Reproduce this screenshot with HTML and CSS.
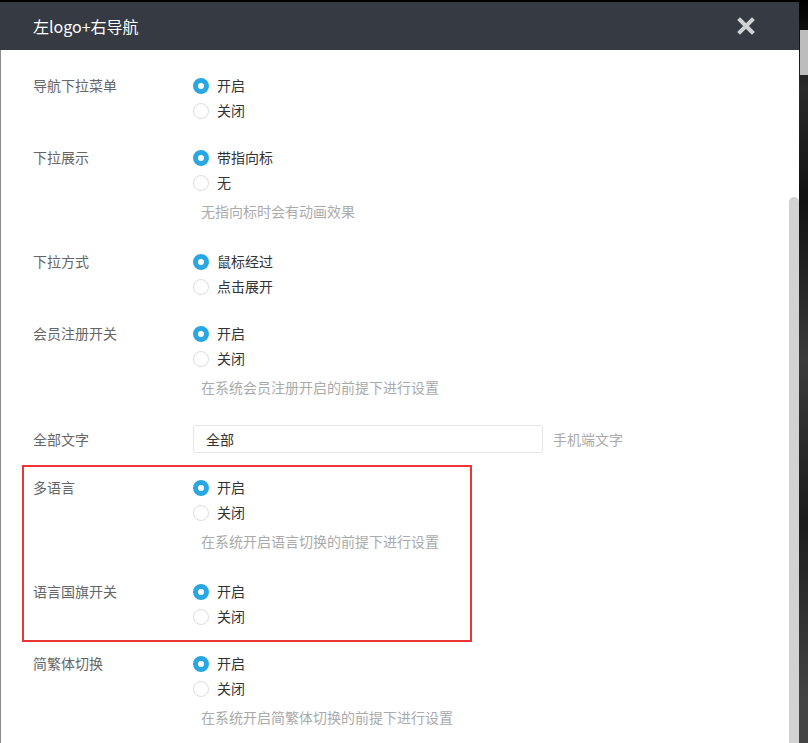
FILE: index.html
```html
<!DOCTYPE html>
<html lang="zh-CN">
<head>
    <meta charset="UTF-8">
    <meta name="viewport" content="width=device-width, initial-scale=1.0">
    <title>左logo+右导航</title>
    <link rel="stylesheet" href="styles.css">
</head>
<body>

    <div class="dialog">
        <div class="dialog-header">
            <span class="dialog-title">左logo+右导航</span>
            <svg class="dialog-close" width="18" height="18" viewBox="0 0 18 18">
                <path d="M3 3 L15 15 M15 3 L3 15" stroke="#cfd1d4" stroke-width="4" stroke-linecap="square"/>
            </svg>
        </div>

        <div class="dialog-body">
            <div class="form">

                <div class="row">
                    <div class="label">导航下拉菜单</div>
                    <div class="field">
                        <div class="radio checked"><i></i>开启</div>
                        <div class="radio"><i></i>关闭</div>
                    </div>
                </div>

                <div class="row">
                    <div class="label">下拉展示</div>
                    <div class="field">
                        <div class="radio checked"><i></i>带指向标</div>
                        <div class="radio"><i></i>无</div>
                        <div class="help">无指向标时会有动画效果</div>
                    </div>
                </div>

                <div class="row">
                    <div class="label">下拉方式</div>
                    <div class="field">
                        <div class="radio checked"><i></i>鼠标经过</div>
                        <div class="radio"><i></i>点击展开</div>
                    </div>
                </div>

                <div class="row">
                    <div class="label">会员注册开关</div>
                    <div class="field">
                        <div class="radio checked"><i></i>开启</div>
                        <div class="radio"><i></i>关闭</div>
                        <div class="help">在系统会员注册开启的前提下进行设置</div>
                    </div>
                </div>

                <div class="row row-input">
                    <div class="label">全部文字</div>
                    <div class="field field-inline">
                        <div class="text-input">全部</div>
                        <span class="side-note">手机端文字</span>
                    </div>
                </div>

                <!-- marked block -->
                <div class="highlight">
                    <div class="row">
                        <div class="label">多语言</div>
                        <div class="field">
                            <div class="radio checked"><i></i>开启</div>
                            <div class="radio"><i></i>关闭</div>
                            <div class="help">在系统开启语言切换的前提下进行设置</div>
                        </div>
                    </div>
                    <div class="row">
                        <div class="label">语言国旗开关</div>
                        <div class="field">
                            <div class="radio checked"><i></i>开启</div>
                            <div class="radio"><i></i>关闭</div>
                        </div>
                    </div>
                </div>

                <div class="row">
                    <div class="label">简繁体切换</div>
                    <div class="field">
                        <div class="radio checked"><i></i>开启</div>
                        <div class="radio"><i></i>关闭</div>
                        <div class="help">在系统开启简繁体切换的前提下进行设置</div>
                    </div>
                </div>

            </div>
            <div class="scrollbar"><div class="thumb"></div></div>
        </div>
    </div>

    <div class="page-scroll"><div class="page-thumb"></div></div>

</body>
</html>
```

FILE: styles.css
```css
html, body {
    height: 100%;
}
body {
    margin: 0;
    display: flex;
    overflow: hidden;
    font-family: "Noto Sans CJK SC", "Noto Sans", sans-serif;
    font-size: 14px;
    background: #000;
}
.dialog {
    width: 799px;
    margin-top: 2px;
    display: flex;
    flex-direction: column;
}
.dialog-header {
    height: 48px;
    flex-shrink: 0;
    background-color: #363a42;
    display: flex;
    align-items: center;
    justify-content: space-between;
    padding: 0 44px 0 33px;
}
.dialog-title {
    color: #fff;
    font-size: 16px;
}
.dialog-close {
    display: block;
}
.dialog-body {
    flex: 1;
    display: flex;
    background: #fff;
    border-left: 1px solid #8c8c8c;
    min-height: 0;
}
.form {
    flex: 1;
    display: flex;
    flex-direction: column;
    gap: 22px;
    padding: 23px 0 0 32px;
}
.row {
    display: flex;
}
.label {
    width: 160px;
    flex-shrink: 0;
    line-height: 25px;
    color: #666;
}
.field {
    display: flex;
    flex-direction: column;
}
.radio {
    display: flex;
    align-items: center;
    gap: 8px;
    height: 25px;
    line-height: 25px;
    color: #333;
}
.radio i {
    width: 16px;
    height: 16px;
    box-sizing: border-box;
    border: 1px solid #dcdcdc;
    border-radius: 50%;
    background: #fff;
}
.radio.checked i {
    border: 5px solid #2aa7e2;
}
.help {
    margin: 4px 0 4px 8px;
    line-height: 24px;
    color: #aaa;
}
.row-input .label {
    line-height: 28px;
}
.field-inline {
    flex-direction: row;
    align-items: center;
    gap: 10px;
}
.text-input {
    width: 350px;
    height: 28px;
    box-sizing: border-box;
    border: 1px solid #e6e6e6;
    border-radius: 2px;
    padding-left: 12px;
    line-height: 26px;
    color: #333;
}
.side-note {
    color: #aaa;
}
.highlight {
    display: flex;
    flex-direction: column;
    gap: 22px;
    width: 450px;
    box-sizing: border-box;
    margin: -10px 0 -13px -11px;
    padding: 8px 0 11px 9px;
    border: 2px solid #ee3535;
}
.scrollbar {
    width: 10px;
    flex-shrink: 0;
    display: flex;
    flex-direction: column;
    padding-top: 147px;
}
.thumb {
    flex: 1;
    background: #d2d2d2;
    border-radius: 5px 5px 0 0;
}
.page-scroll {
    flex: 1;
    background: linear-gradient(180deg, #000 0, #2a2a2a 90px, #111 200px, #3a3a3a 360px, #1c1c1c 520px, #444 700px);
    padding-top: 30px;
    padding-left: 1px;
}
.page-thumb {
    height: 45px;
    background: #bdbdbd;
}
```
